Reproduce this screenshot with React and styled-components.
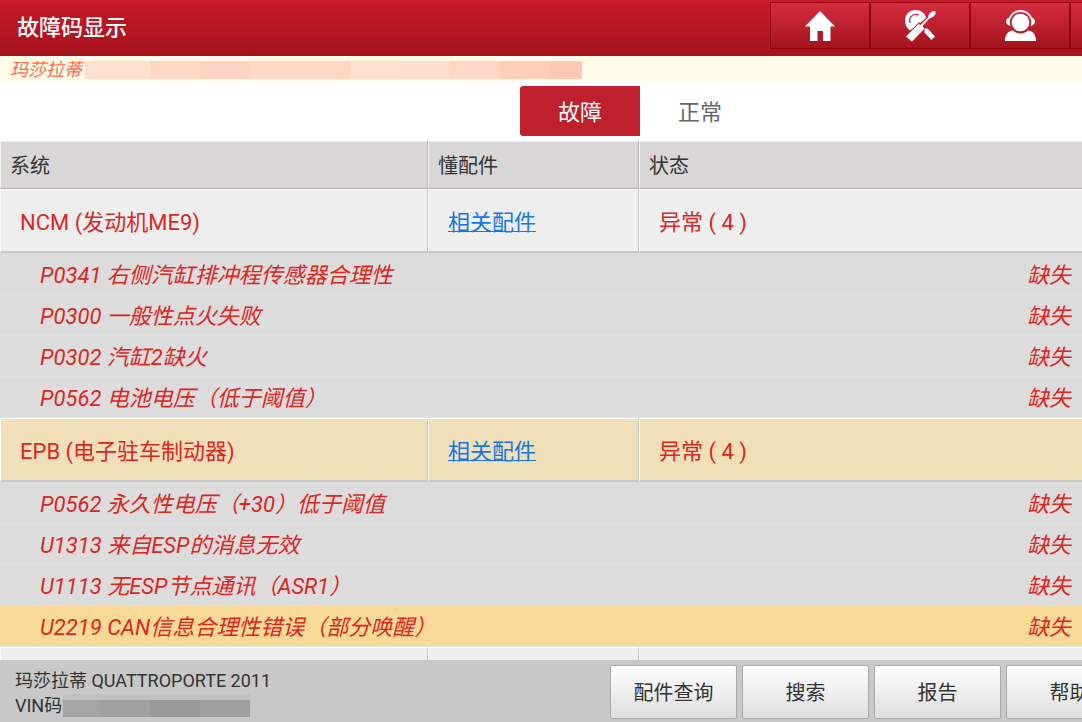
import React from 'react';
import styled, { createGlobalStyle } from 'styled-components';

const GlobalStyle = createGlobalStyle`
  * {
    box-sizing: border-box;
  }

  body {
    margin: 0;
    background: #fff;
    color: #333;
    font-family: Roboto, 'Noto Sans CJK SC', sans-serif;
    overflow: hidden;
  }

  button {
    font-family: inherit;
  }
`;

const Page = styled.div`
  display: flex;
  flex-direction: column;
  height: 100vh;
  overflow: hidden;
`;

const Header = styled.header`
  display: flex;
  justify-content: space-between;
  flex: none;
  height: 56px;
  background: linear-gradient(#c9192a, #a3131c);
`;

const Title = styled.h1`
  margin: 0;
  padding-left: 17px;
  color: #fff;
  font-size: 22px;
  font-weight: 500;
  line-height: 56px;
`;

const Nav = styled.nav`
  display: flex;
  width: 312px;
  padding-top: 2px;
  overflow: hidden;
`;

const NavButton = styled.button`
  display: flex;
  align-items: center;
  justify-content: center;
  flex: 0 0 100px;
  height: 47px;
  padding: 1px 0 0;
  border: 1px solid #8f000b;
  background: linear-gradient(#d52c40, #a3131c);
  color: #fff;
`;

const Vehicle = styled.div`
  display: flex;
  flex: none;
  align-items: center;
  gap: 3px;
  height: 25px;
  padding: 3px 0 0 10px;
  background: #fffbe8;
  color: #ff6844;
  font-size: 18px;
  font-style: italic;
  line-height: 22px;
`;

const VehicleMask = styled.span`
  width: 497px;
  height: 18px;
  background: linear-gradient(
    90deg,
    #ffe0cc 65px,
    #ffd6c2 65px 115px,
    #ffd3c0 115px 165px,
    #ffd6c3 165px 265px,
    #ffe0cd 265px 315px,
    #ffdfcb 315px 365px,
    #ffd7c4 365px 415px,
    #ffcdb9 415px 465px,
    #ffc8b2 465px
  );
`;

const Tabs = styled.div`
  display: flex;
  flex: none;
  justify-content: center;
  height: 60px;
  padding: 5px 0 5px 198px;
`;

const Tab = styled.button`
  width: 120px;
  height: 50px;
  padding: 0 0 2px;
  border: 0;
  border-radius: 3px 0 0 3px;
  background: ${({ $active }) => ($active ? '#be202e' : 'transparent')};
  color: ${({ $active }) => ($active ? '#fff' : '#666')};
  font-size: 22px;
`;

const Content = styled.main`
  flex: 1;
  min-height: 0;
  overflow: hidden;
`;

const Table = styled.table`
  width: 100%;
  border-collapse: separate;
  border-spacing: 0;
  table-layout: fixed;
  text-align: left;
`;

const SystemCol = styled.col`
  width: 428px;
`;

const PartsCol = styled.col`
  width: 211px;
`;

const HeadCell = styled.th`
  height: 48px;
  padding: 0 9px 2px;
  border: 1px solid;
  border-color: #eee #b9b7b8 #b3b1b2 #f4f4f4;
  background: #d8d6d7;
  font-size: 20px;
  font-weight: 400;

  &:last-child {
    border-right: 0;
  }
`;

const SystemCell = styled.td`
  height: 64px;
  padding: 0 19px 2px;
  border: 1px solid;
  border-bottom-width: 2px;
  border-color: #fff #c6c6c6 #c9c9c9 #fbfbfb;
  background: ${({ $selected }) => ($selected ? '#f1dfba' : '#eee')};
  color: #dd261e;
  font-size: 22px;

  &:last-child {
    border-right: 0;
  }
`;

const CodeCell = styled.td`
  height: 41px;
  padding: ${({ $status }) => ($status ? '0 11px 2px 0' : '0 0 2px 40px')};
  border-bottom: 1px solid #e0e0e0;
  background: ${({ $selected }) => ($selected ? '#f9d996' : '#dcdcdc')};
  color: #dd261e;
  font-size: 22px;
  font-style: italic;
  text-align: ${({ $status }) => ($status ? 'right' : 'left')};
  white-space: nowrap;

  tr:nth-child(2) > & {
    height: 42px;
  }
`;

const PartsLink = styled.a`
  color: #1478e6;
  text-decoration: underline;
  text-decoration-thickness: 1px;
`;

const Footer = styled.footer`
  display: flex;
  flex: none;
  justify-content: space-between;
  height: 62px;
  background: #c8c8c8;
  overflow: hidden;
`;

const Info = styled.div`
  padding: 8px 0 0 15px;
  font-size: 18px;
  line-height: 25px;
`;

const InfoLine = styled.div`
  display: flex;
  align-items: center;
  gap: 1px;
`;

const VinMask = styled.span`
  width: 187px;
  height: 23px;
  border-top: 6px solid #c0c0c0;
  background: linear-gradient(90deg, #a5a5a5 37px, #a1a1a1 37px 87px, #9b9b9b 87px 137px, #a0a0a0 137px);
`;

const Actions = styled.div`
  display: flex;
  gap: 5px;
  width: 472px;
  padding-top: 5px;
  overflow: hidden;
`;

const ActionButton = styled.button`
  flex: 0 0 127px;
  height: 54px;
  padding: 0 0 2px;
  border: 1px solid #aaa;
  border-radius: 2px;
  background: linear-gradient(#fff, #dedede);
  color: #333;
  font-size: 20px;
`;

const HomeIcon = () => (
  <svg width="32" height="32" viewBox="0 0 32 32" fill="currentColor">
    <path d="M16 1 31 16.500H26.500V31H19V21H13.500V31H6V16.500H1Z" />
  </svg>
);

const RepairIcon = () => (
  <svg width="32" height="32" viewBox="0 0 32 32" fill="currentColor">
    <path d="M11.500 0C17 0 21 3.500 22 8L15 14 6 20.500C2.500 18 1 14.500 1 10.500 1 4.500 5.500 0 11.500 0Z" />
    <path d="M6 12.500C4.500 7.500 9 3 14.500 5" fill="none" stroke="#c02535" strokeWidth="1.300" strokeLinecap="round" />
    <path d="M15 14 20.500 18.500 8 31 3 26.500Z M17 16 28 5" stroke="#bb2030" strokeWidth="2.500" />
    <path d="M14.500 14 16.500 15 24 7.500 25 4 28.500 1H31.500V4L29 7 25.500 8.500 18.500 16 20.500 18.500 8 31.500 2 26.500Z" />
    <path d="M20.500 18.500H23.500L31 26.500 27.500 30 20.500 22.500Z" />
  </svg>
);

const SupportIcon = () => (
  <svg width="32" height="32" viewBox="0 0 32 32" fill="currentColor">
    <circle cx="16.500" cy="12.500" r="8.800" />
    <path d="M5.500 9C7.500 3.500 11.500 1 16.500 1s9 2.500 11 8" fill="none" stroke="currentColor" strokeWidth="1.800" />
    <path d="M6.500 7C3.500 7.500 2 9.500 2 11.500S3.500 15.500 6.500 16C5.500 13 5.500 10 6.500 7ZM26.500 7c3 .5 4.500 2.500 4.500 4.500S29.500 15.500 26.500 16c1-3 1-6 0-9Z" />
    <path d="M1 31C1 25 3.500 21 9 20.500 13.500 24.500 19.500 24.500 24 20.500 29.500 21 32 25 32 31Z" />
  </svg>
);

const systems = [
  {
    name: 'NCM (发动机ME9)',
    status: '异常 ( 4 )',
    codes: [
      { code: 'P0341', text: '右侧汽缸排冲程传感器合理性' },
      { code: 'P0300', text: '一般性点火失败' },
      { code: 'P0302', text: '汽缸2缺火' },
      { code: 'P0562', text: '电池电压（低于阈值）' },
    ],
  },
  {
    name: 'EPB (电子驻车制动器)',
    status: '异常 ( 4 )',
    selected: true,
    codes: [
      { code: 'P0562', text: '永久性电压（+30）低于阈值' },
      { code: 'U1313', text: '来自ESP的消息无效' },
      { code: 'U1113', text: '无ESP节点通讯（ASR1）' },
      { code: 'U2219', text: 'CAN信息合理性错误（部分唤醒）', selected: true },
    ],
  },
];

const actions = ['配件查询', '搜索', '报告', '帮助'];

const SystemGroup = ({ system }) => (
  <tbody>
    <tr>
      <SystemCell $selected={system.selected}>{system.name}</SystemCell>
      <SystemCell $selected={system.selected}>
        <PartsLink href="#parts">相关配件</PartsLink>
      </SystemCell>
      <SystemCell $selected={system.selected}>{system.status}</SystemCell>
    </tr>
    {system.codes.map(({ code, text, selected }) => (
      <tr key={code}>
        <CodeCell colSpan={2} $selected={selected}>{code} {text}</CodeCell>
        <CodeCell $status $selected={selected}>缺失</CodeCell>
      </tr>
    ))}
  </tbody>
);

export default function App() {
  const [tab, setTab] = React.useState('故障');

  return (
    <Page>
      <GlobalStyle />
      <Header>
        <Title>故障码显示</Title>
        <Nav>
          <NavButton><HomeIcon /></NavButton>
          <NavButton><RepairIcon /></NavButton>
          <NavButton><SupportIcon /></NavButton>
          <NavButton />
        </Nav>
      </Header>
      <Vehicle>
        玛莎拉蒂
        <VehicleMask />
      </Vehicle>
      <Tabs>
        {['故障', '正常'].map((name) => (
          <Tab key={name} $active={tab === name} onClick={() => setTab(name)}>{name}</Tab>
        ))}
      </Tabs>
      <Content>
        <Table>
          <colgroup>
            <SystemCol />
            <PartsCol />
            <col />
          </colgroup>
          <thead>
            <tr>
              <HeadCell>系统</HeadCell>
              <HeadCell>懂配件</HeadCell>
              <HeadCell>状态</HeadCell>
            </tr>
          </thead>
          {systems.map((system) => <SystemGroup key={system.name} system={system} />)}
          {/* next system, scrolled under the footer */}
          <tbody>
            <tr>
              <SystemCell />
              <SystemCell />
              <SystemCell />
            </tr>
          </tbody>
        </Table>
      </Content>
      <Footer>
        <Info>
          <InfoLine>玛莎拉蒂 QUATTROPORTE 2011</InfoLine>
          <InfoLine>
            VIN码
            <VinMask />
          </InfoLine>
        </Info>
        <Actions>
          {actions.map((name) => <ActionButton key={name}>{name}</ActionButton>)}
        </Actions>
      </Footer>
    </Page>
  );
}
